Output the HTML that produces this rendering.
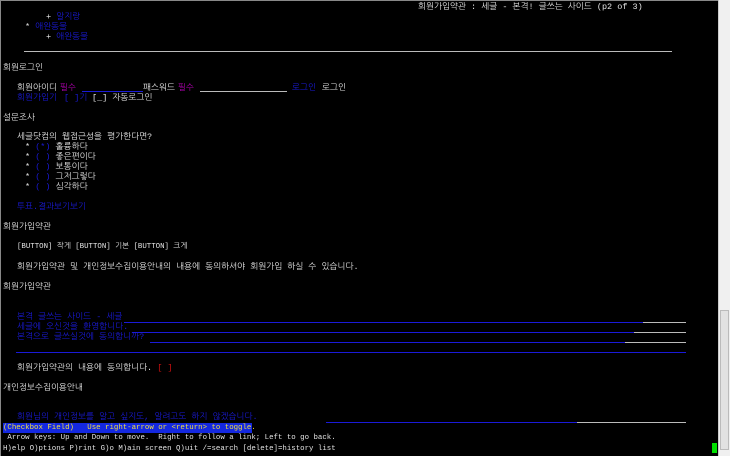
<!DOCTYPE html>
<html><head><meta charset="utf-8"><style>
html,body{margin:0;padding:0;background:#000;width:730px;height:456px;overflow:hidden}
body{position:relative;font-family:"Liberation Mono","NanumGothic","Noto Sans CJK KR",monospace;font-size:8.5px;color:#e4e4e4}
.t{position:absolute;white-space:pre;line-height:10px;height:10px}
.b{color:#1a1ad8}.m{color:#b000b0}.r{color:#d01010}
.l{position:absolute;height:1px}
.s{font-size:7.4px}
</style></head><body>
<div class="l" style="left:0;top:0;width:718px;background:#888"></div>
<div class="l" style="left:0;top:0;width:1px;height:456px;background:#888"></div>
<div style="position:absolute;left:718px;top:0;width:12px;height:456px;background:#f0f0f0;border-left:1px solid #ccc"></div>
<div style="position:absolute;left:720px;top:310px;width:9px;height:140px;background:#e2e2e2;border:1px solid #bbb;box-sizing:border-box"></div>
<div style="position:absolute;left:712px;top:443px;width:5px;height:10px;background:#00e000"></div>

<div class="t" style="left:418px;top:2px">회원가입약관 : 세글 - 본격! 글쓰는 사이드 (p2 of 3)</div>
<div class="t" style="left:46px;top:12px">+ <span class="b">알지랑</span></div>
<div class="t" style="left:25px;top:22px">* <span class="b">애완동물</span></div>
<div class="t" style="left:46px;top:32px">+ <span class="b">애완동물</span></div>
<div class="l" style="left:24px;top:51px;width:648px;background:#bbb"></div>
<div class="t" style="left:3px;top:63px">회원로그인</div>
<div class="t" style="left:17px;top:83px">회원아이디</div>
<div class="t m" style="left:60px;top:83px">필수</div>
<div class="l" style="left:82px;top:91px;width:61px;background:#1a1ad8"></div>
<div class="t" style="left:143px;top:83px">패스워드</div>
<div class="t m" style="left:178px;top:83px">필수</div>
<div class="l" style="left:200px;top:91px;width:87px;background:#bbb"></div>
<div class="t b" style="left:292px;top:83px">로그인</div>
<div class="t" style="left:322px;top:83px">로그인</div>
<div class="t b" style="left:17px;top:93px">회원가입기</div>
<div class="t b" style="left:64px;top:93px">[ ]기</div>
<div class="t" style="left:92px;top:93px">[_] 자동로그인</div>
<div class="t" style="left:3px;top:113px">설문조사</div>
<div class="t" style="left:17px;top:132px">세글닷컴의 웹접근성을 평가한다면?</div>
<div class="t" style="left:25px;top:142px">* <span class="b">(*)</span> 훌륭하다</div>
<div class="t" style="left:25px;top:152px">* <span class="b">( )</span> 좋은편이다</div>
<div class="t" style="left:25px;top:162px">* <span class="b">( )</span> 보통이다</div>
<div class="t" style="left:25px;top:172px">* <span class="b">( )</span> 그저그렇다</div>
<div class="t" style="left:25px;top:182px">* <span class="b">( )</span> 심각하다</div>
<div class="t b" style="left:17px;top:202px">투표.결과보기보기</div>
<div class="t" style="left:3px;top:222px">회원가입약관</div>
<div class="t s" style="left:17px;top:242px">[BUTTON] 작게 [BUTTON] 기본 [BUTTON] 크게</div>
<div class="t" style="left:17px;top:262px">회원가입약관 및 개인정보수집이용안내의 내용에 동의하셔야 회원가입 하실 수 있습니다.</div>
<div class="t" style="left:3px;top:282px">회원가입약관</div>
<div class="t b" style="left:17px;top:312px">본격 글쓰는 사이드 - 세글</div>
<div class="l" style="left:124px;top:322px;width:519px;background:#1a1ad8"></div>
<div class="l" style="left:643px;top:322px;width:43px;background:#bbb"></div>
<div class="t b" style="left:17px;top:322px">세글에 오신것을 환영합니다.</div>
<div class="l" style="left:132px;top:332px;width:502px;background:#1a1ad8"></div>
<div class="l" style="left:634px;top:332px;width:52px;background:#bbb"></div>
<div class="t b" style="left:17px;top:332px">본격으로 글쓰실것에 동의합니까?</div>
<div class="l" style="left:150px;top:342px;width:475px;background:#1a1ad8"></div>
<div class="l" style="left:625px;top:342px;width:61px;background:#bbb"></div>
<div class="l" style="left:16px;top:352px;width:670px;background:#1a1ad8"></div>
<div class="t" style="left:17px;top:363px">회원가입약관의 내용에 동의합니다. <span class="r">[ ]</span></div>
<div class="t" style="left:3px;top:383px">개인정보수집이용안내</div>
<div class="t b" style="left:17px;top:412px">회원님의 개인정보를 알고 싶지도, 알려고도 하지 않겠습니다.</div>
<div class="l" style="left:326px;top:422px;width:251px;background:#1a1ad8"></div>
<div class="l" style="left:577px;top:422px;width:109px;background:#bbb"></div>
<div style="position:absolute;left:3px;top:423px;width:249px;height:10px;background:#1428e0"></div>
<div class="t s" style="left:3px;top:423px;color:#f0e040">(Checkbox Field)   Use right-arrow or &lt;return&gt; to toggle.</div>
<div class="t s" style="left:3px;top:433px"> Arrow keys: Up and Down to move.  Right to follow a link; Left to go back.</div>
<div class="t s" style="left:3px;top:444px">H)elp O)ptions P)rint G)o M)ain screen Q)uit /=search [delete]=history list</div>
</body></html>
